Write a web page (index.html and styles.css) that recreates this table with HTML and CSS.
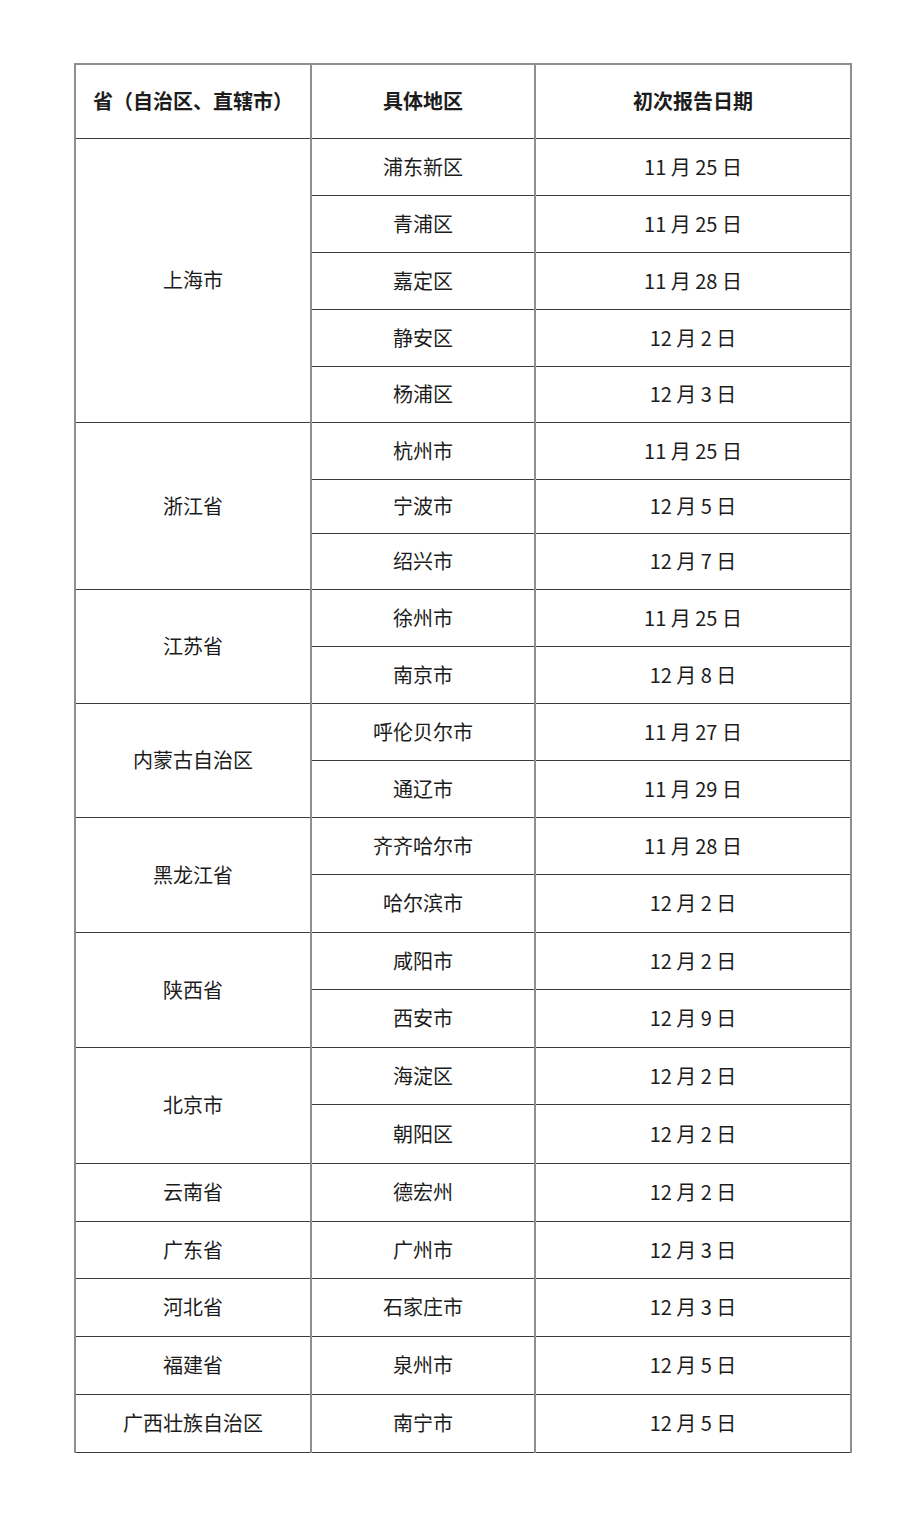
FILE: index.html
```html
<!DOCTYPE html>
<html lang="zh-CN">
<head>
<meta charset="utf-8">
<title>初次报告日期</title>
<link rel="stylesheet" href="styles.css">
</head>
<body>
<div class="page">
<table class="report">
  <colgroup>
    <col class="c1"><col class="c2"><col class="c3">
  </colgroup>
  <thead>
    <tr class="head">
      <th>省（自治区、直辖市）</th>
      <th>具体地区</th>
      <th>初次报告日期</th>
    </tr>
  </thead>
  <tbody>
    <tr class="r57"><td rowspan="5">上海市</td><td>浦东新区</td><td>11 月 25 日</td></tr>
    <tr class="r57"><td>青浦区</td><td>11 月 25 日</td></tr>
    <tr class="r57"><td>嘉定区</td><td>11 月 28 日</td></tr>
    <tr class="r57"><td>静安区</td><td>12 月 2 日</td></tr>
    <tr class="r56"><td>杨浦区</td><td>12 月 3 日</td></tr>
    <tr class="r57"><td rowspan="3">浙江省</td><td>杭州市</td><td>11 月 25 日</td></tr>
    <tr class="r54"><td>宁波市</td><td>12 月 5 日</td></tr>
    <tr class="r56"><td>绍兴市</td><td>12 月 7 日</td></tr>
    <tr class="r57"><td rowspan="2">江苏省</td><td>徐州市</td><td>11 月 25 日</td></tr>
    <tr class="r57"><td>南京市</td><td>12 月 8 日</td></tr>
    <tr class="r57"><td rowspan="2">内蒙古自治区</td><td>呼伦贝尔市</td><td>11 月 27 日</td></tr>
    <tr class="r57"><td>通辽市</td><td>11 月 29 日</td></tr>
    <tr class="r57"><td rowspan="2">黑龙江省</td><td>齐齐哈尔市</td><td>11 月 28 日</td></tr>
    <tr class="r58"><td>哈尔滨市</td><td>12 月 2 日</td></tr>
    <tr class="r57"><td rowspan="2">陕西省</td><td>咸阳市</td><td>12 月 2 日</td></tr>
    <tr class="r58"><td>西安市</td><td>12 月 9 日</td></tr>
    <tr class="r57"><td rowspan="2">北京市</td><td>海淀区</td><td>12 月 2 日</td></tr>
    <tr class="r59"><td>朝阳区</td><td>12 月 2 日</td></tr>
    <tr class="r58"><td>云南省</td><td>德宏州</td><td>12 月 2 日</td></tr>
    <tr class="r57"><td>广东省</td><td>广州市</td><td>12 月 3 日</td></tr>
    <tr class="r58"><td>河北省</td><td>石家庄市</td><td>12 月 3 日</td></tr>
    <tr class="r58"><td>福建省</td><td>泉州市</td><td>12 月 5 日</td></tr>
    <tr class="r58"><td>广西壮族自治区</td><td>南宁市</td><td>12 月 5 日</td></tr>
  </tbody>
</table>
</div>
</body>
</html>
```

FILE: styles.css
```css
html, body {
  margin: 0;
  padding: 0;
  background: #ffffff;
}

.page {
  padding: 63px 0 0 74px;
}

.report {
  border-collapse: collapse;
  table-layout: fixed;
  width: 776px;
  font-family: "Noto Sans CJK SC", "Noto Sans", sans-serif;
  font-size: 20px;
  color: #1c1c1c;
}

.c1 { width: 236px; }
.c2 { width: 224px; }
.c3 { width: 316px; }

.report th,
.report td {
  padding: 0;
  text-align: center;
  vertical-align: middle;
  border-left: 2px solid #8e8e8e;
  border-right: 2px solid #8e8e8e;
  border-top: 1px solid #3c3c3c;
  border-bottom: 1px solid #3c3c3c;
  line-height: 1;
}

.report th {
  font-weight: 700;
  border-top: 2px solid #8e8e8e;
}

.head { height: 74px; }
.r54 { height: 54px; }
.r56 { height: 56px; }
.r57 { height: 57px; }
.r58 { height: 58px; }
.r59 { height: 59px; }
```
